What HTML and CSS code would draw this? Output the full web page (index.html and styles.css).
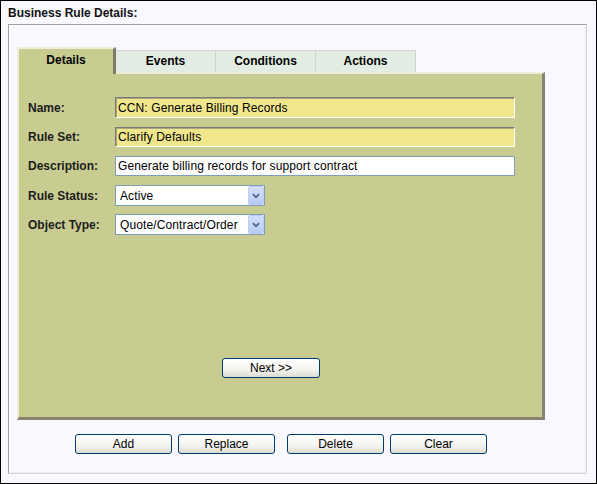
FILE: index.html
```html
<!DOCTYPE html>
<html lang="en">

<head>
    <meta charset="UTF-8">
    <title>Business Rule Details</title>
    <link rel="stylesheet" href="styles.css">
</head>

<body>
    <div class="frame">
        <div class="title">Business Rule Details:</div>
        <div class="rule-box">
            <div class="tabs">
                <div class="tab active">Details</div>
                <div class="tab">Events</div>
                <div class="tab">Conditions</div>
                <div class="tab">Actions</div>
            </div>
            <div class="panel">
                <div class="field-row">
                    <label for="name">Name:</label>
                    <input type="text" id="name" class="text-input readonly h21" value="CCN: Generate Billing Records">
                </div>
                <div class="field-row">
                    <label for="ruleSet">Rule Set:</label>
                    <input type="text" id="ruleSet" class="text-input readonly" value="Clarify Defaults">
                </div>
                <div class="field-row">
                    <label for="description">Description:</label>
                    <input type="text" id="description" class="text-input" value="Generate billing records for support contract">
                </div>
                <div class="field-row">
                    <label for="ruleStatus">Rule Status:</label>
                    <div class="select-wrap">
                        <select id="ruleStatus">
                            <option>Active</option>
                            <option>Inactive</option>
                        </select>
                        <svg class="select-arrow" width="16" height="19" viewBox="0 0 16 19">
                            <path d="M4.5 8 L8 11.5 L11.5 8" fill="none" stroke="#4d6185" stroke-width="2"/>
                        </svg>
                    </div>
                </div>
                <div class="field-row last">
                    <label for="objectType">Object Type:</label>
                    <div class="select-wrap">
                        <select id="objectType">
                            <option>Quote/Contract/Order</option>
                        </select>
                        <svg class="select-arrow" width="16" height="19" viewBox="0 0 16 19">
                            <path d="M4.5 8 L8 11.5 L11.5 8" fill="none" stroke="#4d6185" stroke-width="2"/>
                        </svg>
                    </div>
                </div>
                <div class="panel-footer">
                    <button class="xp-button next">Next &gt;&gt;</button>
                </div>
            </div>
            <div class="actions">
                <button class="xp-button">Add</button>
                <button class="xp-button">Replace</button>
                <button class="xp-button spaced">Delete</button>
                <button class="xp-button">Clear</button>
            </div>
        </div>
    </div>
</body>

</html>
```

FILE: styles.css
```css
html,
body {
    margin: 0;
    padding: 0;
}

body {
    font-family: 'Liberation Sans', Arial, sans-serif;
    font-size: 12px;
    color: #000;
}

.frame {
    width: 597px;
    height: 484px;
    box-sizing: border-box;
    border: 1px solid #000;
    background-color: #f9f8fe;
}

.title {
    height: 23px;
    box-sizing: border-box;
    padding: 5px 0 0 7px;
    line-height: 14px;
    font-weight: bold;
    color: #111;
}

.rule-box {
    margin-left: 7px;
    width: 579px;
    height: 450px;
    box-sizing: border-box;
    border: 1px solid;
    border-color: #a0a0a0 #d6d6d6 #d6d6d6 #a0a0a0;
    box-shadow: inset 1px 1px #fff, inset -1px -1px #ececec;
    padding: 22px 0 0 8px;
}

/* tab strip */
.tabs {
    display: flex;
    align-items: flex-end;
    height: 25px;
}

.tab {
    width: 100px;
    height: 22px;
    box-sizing: border-box;
    border: 1px solid #cdd6cd;
    border-bottom: none;
    border-left: none;
    background-color: #e3ece3;
    font-weight: bold;
    text-align: center;
    line-height: 21px;
}

.tab.active {
    position: relative;
    z-index: 1;
    width: 99px;
    height: 27px;
    margin-bottom: -2px;
    border-top: 2px solid #efedd9;
    border-left: 2px solid #efedd9;
    border-right: 3px solid #7f7b6c;
    background-color: #c8cc90;
    line-height: 22px;
}

/* green panel */
.panel {
    width: 528px;
    height: 348px;
    box-sizing: border-box;
    display: flex;
    flex-direction: column;
    border-top: 2px solid #efedd9;
    border-left: 2px solid #efedd9;
    border-right: 3px solid #878373;
    border-bottom: 3px solid #878373;
    background-color: #c8cc90;
    padding: 23px 0 39px 9px;
}

.field-row {
    display: flex;
    align-items: center;
    margin-bottom: 9px;
}

.field-row.last {
    margin-top: -1px;
}

.field-row label {
    width: 87px;
    font-weight: bold;
    color: #1c1c1c;
}

.text-input {
    width: 400px;
    height: 20px;
    box-sizing: border-box;
    padding: 0 0 0 2px;
    border: 1px solid #7f9db9;
    background-color: #fff;
    font-family: inherit;
    font-size: 12px;
    letter-spacing: 0.12px;
    color: #000;
}

.text-input.readonly {
    border-color: #7a7a7a #fff #fff #7a7a7a;
    box-shadow: inset 1px 1px #a9a67e;
    background-color: #f0e68c;
}

.text-input.h21 {
    height: 21px;
}

.select-wrap {
    position: relative;
    width: 150px;
    height: 21px;
}

.select-wrap select {
    appearance: none;
    -webkit-appearance: none;
    width: 150px;
    height: 21px;
    box-sizing: border-box;
    margin: 0;
    padding: 0 0 0 4px;
    border: 1px solid #7f9db9;
    border-radius: 0;
    background-color: #fff;
    font-family: inherit;
    font-size: 12px;
    letter-spacing: 0.12px;
    color: #000;
}

.select-arrow {
    position: absolute;
    top: 1px;
    right: 1px;
    box-sizing: border-box;
    border: 1px solid #bccdf5;
    border-radius: 2px;
    background: linear-gradient(#d3e0fb, #b9cbf5);
    pointer-events: none;
}

.panel-footer {
    margin-top: auto;
}

/* xp style buttons */
.xp-button {
    width: 97px;
    height: 20px;
    box-sizing: border-box;
    padding: 0;
    border: 1px solid #003c74;
    border-radius: 3px;
    background: linear-gradient(#ffffff, #f3f3ef 60%, #dedbd0);
    font-family: inherit;
    font-size: 12px;
    color: #000;
    cursor: pointer;
}

.xp-button.next {
    width: 98px;
    margin-left: 194px;
}

.actions {
    display: flex;
    gap: 6px;
    margin: 14px 0 0 58px;
}

.actions .spaced {
    margin-left: 6px;
}
```
